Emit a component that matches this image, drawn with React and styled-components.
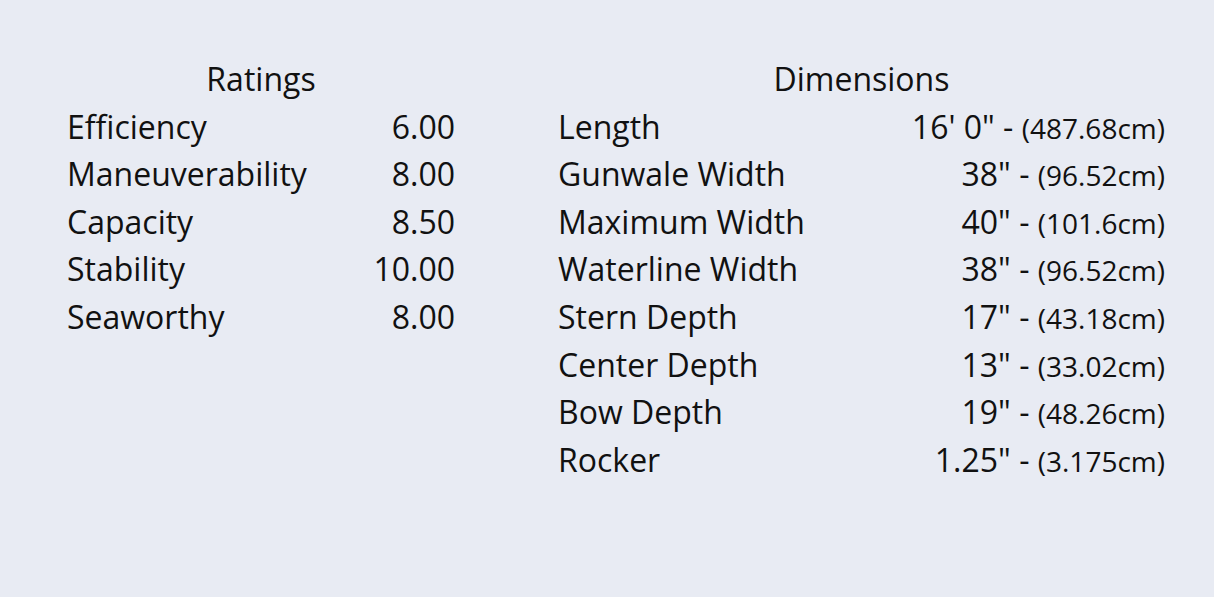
import styled, { createGlobalStyle } from "styled-components";

const GlobalStyle = createGlobalStyle`
  html, body {
    margin: 0;
    padding: 0;
    background: #e8ebf3;
  }
  body {
    font-family: "Open Sans", "Noto Sans", sans-serif;
    color: #111;
  }
`;

const Page = styled.main`
  display: flex;
  align-items: flex-start;
  gap: 103px;
  padding: 55px 0 0 67px;
  height: 597px;
  box-sizing: border-box;
`;

const Table = styled.section`
  width: ${(p) => p.$width}px;
  display: flex;
  flex-direction: column;
`;

const Heading = styled.h2`
  margin: 0;
  font-size: 32px;
  font-weight: 400;
  line-height: 47.6px;
  height: 47.6px;
  text-align: center;
`;

const Row = styled.div`
  display: flex;
  justify-content: space-between;
  align-items: baseline;
  font-size: 32px;
  line-height: 47.6px;
  height: 47.6px;
`;

const Label = styled.span`
  white-space: nowrap;
`;

const Value = styled.span`
  text-align: right;
  white-space: nowrap;
`;

const Metric = styled.span`
  font-size: 28px;
  line-height: 1;
`;

const ratings = [
  ["Efficiency", "6.00"],
  ["Maneuverability", "8.00"],
  ["Capacity", "8.50"],
  ["Stability", "10.00"],
  ["Seaworthy", "8.00"],
];

const dimensions = [
  ["Length", "16' 0\"", "487.68cm"],
  ["Gunwale Width", "38\"", "96.52cm"],
  ["Maximum Width", "40\"", "101.6cm"],
  ["Waterline Width", "38\"", "96.52cm"],
  ["Stern Depth", "17\"", "43.18cm"],
  ["Center Depth", "13\"", "33.02cm"],
  ["Bow Depth", "19\"", "48.26cm"],
  ["Rocker", "1.25\"", "3.175cm"],
];

export default function App() {
  return (
    <>
      <GlobalStyle />
      <Page>
        <Table $width={388}>
          <Heading>Ratings</Heading>
          {ratings.map(([name, value]) => (
            <Row key={name}>
              <Label>{name}</Label>
              <Value>{value}</Value>
            </Row>
          ))}
        </Table>
        <Table $width={607}>
          <Heading>Dimensions</Heading>
          {dimensions.map(([name, imperial, metric]) => (
            <Row key={name}>
              <Label>{name}</Label>
              <Value>
                {imperial} - <Metric>({metric})</Metric>
              </Value>
            </Row>
          ))}
        </Table>
      </Page>
    </>
  );
}
